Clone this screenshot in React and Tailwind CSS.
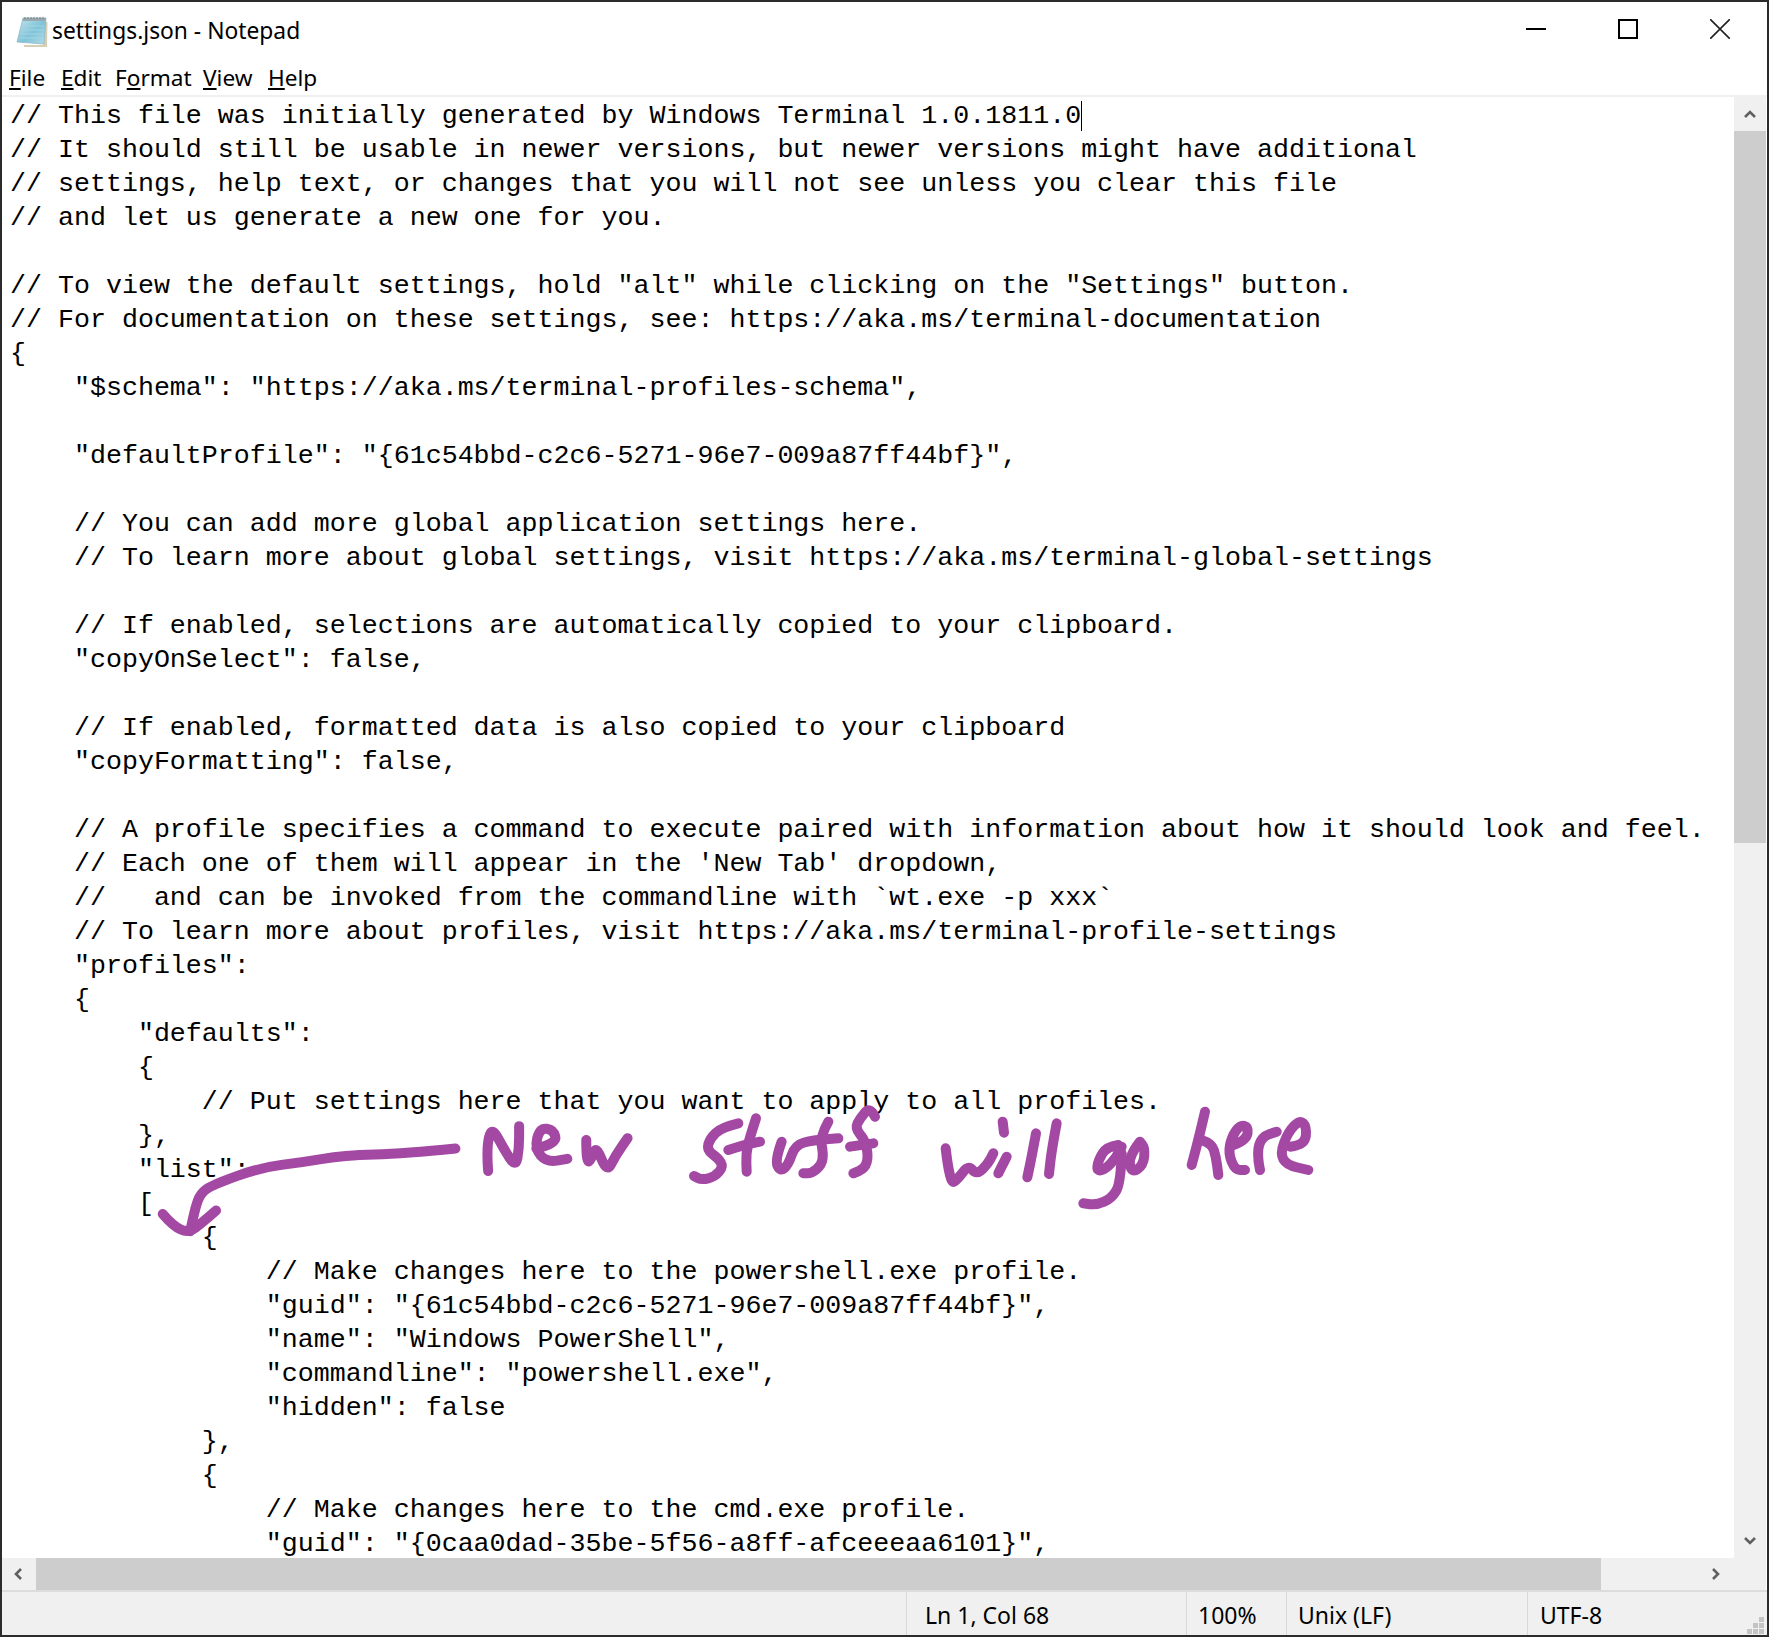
const lines = [
  '// This file was initially generated by Windows Terminal 1.0.1811.0',
  '// It should still be usable in newer versions, but newer versions might have additional',
  '// settings, help text, or changes that you will not see unless you clear this file',
  '// and let us generate a new one for you.',
  '',
  '// To view the default settings, hold "alt" while clicking on the "Settings" button.',
  '// For documentation on these settings, see: https://aka.ms/terminal-documentation',
  '{',
  '    "$schema": "https://aka.ms/terminal-profiles-schema",',
  '',
  '    "defaultProfile": "{61c54bbd-c2c6-5271-96e7-009a87ff44bf}",',
  '',
  '    // You can add more global application settings here.',
  '    // To learn more about global settings, visit https://aka.ms/terminal-global-settings',
  '',
  '    // If enabled, selections are automatically copied to your clipboard.',
  '    "copyOnSelect": false,',
  '',
  '    // If enabled, formatted data is also copied to your clipboard',
  '    "copyFormatting": false,',
  '',
  '    // A profile specifies a command to execute paired with information about how it should look and feel.',
  "    // Each one of them will appear in the 'New Tab' dropdown,",
  '    //   and can be invoked from the commandline with `wt.exe -p xxx`',
  '    // To learn more about profiles, visit https://aka.ms/terminal-profile-settings',
  '    "profiles":',
  '    {',
  '        "defaults":',
  '        {',
  '            // Put settings here that you want to apply to all profiles.',
  '        },',
  '        "list":',
  '        [',
  '            {',
  '                // Make changes here to the powershell.exe profile.',
  '                "guid": "{61c54bbd-c2c6-5271-96e7-009a87ff44bf}",',
  '                "name": "Windows PowerShell",',
  '                "commandline": "powershell.exe",',
  '                "hidden": false',
  '            },',
  '            {',
  '                // Make changes here to the cmd.exe profile.',
  '                "guid": "{0caa0dad-35be-5f56-a8ff-afceeeaa6101}",',
];

const menu = [
  { before: '', key: 'F', after: 'ile', width: 'w-[52px]' },
  { before: '', key: 'E', after: 'dit', width: 'w-[54px]' },
  { before: 'F', key: 'o', after: 'rmat', width: 'w-[88px]' },
  { before: '', key: 'V', after: 'iew', width: 'w-[65px]' },
  { before: '', key: 'H', after: 'elp', width: 'w-[60px]' },
];

// strokes traced from the crops: [originX, originY, crop scale, points]
const A = [130, 1090, 2.904];
const C = [680, 1090, 3];
const D = [1000, 1090, 3];
const ink = [
  [...A, [[945, 170], [800, 185], [620, 190], [500, 210], [380, 225], [240, 275], [205, 300], [190, 340], [175, 410]]],
  [...A, [[95, 360], [125, 395], [170, 415], [210, 385], [250, 350]]],
  [...A, [[1040, 235], [1035, 170], [1050, 105], [1085, 170], [1120, 225], [1130, 170], [1130, 105]]],
  [...A, [[1180, 170], [1240, 155], [1230, 115], [1190, 110], [1175, 170], [1210, 210], [1270, 200]]],
  [...A, [[1325, 145], [1325, 220], [1345, 190], [1355, 165], [1385, 240], [1410, 190], [1445, 140]]],
  [...C, [[175, 100], [125, 112], [90, 145], [80, 180], [115, 205], [130, 230], [105, 260], [65, 270], [42, 258]]],
  [...C, [[228, 85], [210, 140], [198, 190], [200, 245]]],
  [...C, [[145, 180], [190, 165], [240, 155]]],
  [...C, [[305, 155], [285, 210], [300, 245], [325, 225], [345, 165], [400, 150], [475, 145]]],
  [...C, [[445, 95], [420, 140], [430, 190], [425, 225], [395, 250], [370, 250]]],
  [...C, [[585, 80], [570, 50], [540, 85], [525, 115], [555, 150], [565, 200], [555, 235], [520, 250]]],
  [...C, [[510, 170], [580, 160]]],
  [...C, [[797, 175], [810, 285], [835, 265], [865, 225], [890, 255], [925, 220], [940, 190]]],
  [...C, [[968, 95], [972, 128]]],
  [...C, [[980, 200], [955, 250]]],
  [...C, [[1068, 130], [1055, 200], [1042, 262]]],
  [...D, [[170, 100], [155, 180], [147, 252]]],
  [...D, [[355, 165], [320, 170], [295, 210], [290, 245], [320, 235], [350, 200], [365, 170]]],
  [...D, [[365, 190], [362, 280], [335, 325], [290, 345], [250, 340]]],
  [...D, [[420, 155], [385, 200], [395, 250], [430, 225], [435, 175], [420, 155]]],
  [...D, [[615, 65], [600, 130], [575, 225]]],
  [...D, [[605, 150], [635, 160], [648, 200], [655, 255]]],
  [...D, [[700, 165], [740, 150], [745, 110], [720, 105], [695, 140], [685, 190], [705, 240], [735, 240]]],
  [...D, [[780, 240], [770, 190], [785, 140], [830, 125]]],
  [...D, [[870, 170], [915, 165], [920, 110], [900, 90], [865, 125], [840, 190], [860, 225], [925, 240]]],
];

function smooth([ox, oy, scale, pts]) {
  const p = pts.map(([x, y]) => [ox + x / scale, oy + y / scale]);
  let d = `M${p[0][0]} ${p[0][1]}`;
  for (let i = 1; i < p.length - 1; i++) {
    const mx = (p[i][0] + p[i + 1][0]) / 2;
    const my = (p[i][1] + p[i + 1][1]) / 2;
    d += ` Q${p[i][0]} ${p[i][1]} ${mx} ${my}`;
  }
  const last = p[p.length - 1];
  return `${d} L${last[0]} ${last[1]}`;
}

function NotepadIcon() {
  return (
    <svg width="32" height="33" viewBox="0 0 32 33" className="ml-[14px] shrink-0">
      <defs>
        <linearGradient id="page" x1="0" y1="0" x2="1" y2="1">
          <stop offset="0" stopColor="#c4e6f0" />
          <stop offset="0.55" stopColor="#7fc3d8" />
          <stop offset="1" stopColor="#b4dde9" />
        </linearGradient>
      </defs>
      <path d="M8 32 L31 32 L31.5 7 L28 7 L27 30 L8 30 Z" fill="#d6cfb4" />
      <path d="M7 3 L30 3 L28 29 L1 27 Z" fill="url(#page)" stroke="#8fb9c6" strokeWidth="0.8" />
      <path d="M6 11 H28 M5 15 H28 M4 19 H27 M3.5 23 H27" stroke="#a4d4e2" strokeWidth="1" />
      <path d="M7 3 L30 3 L29.7 6 L6.6 6 Z" fill="#9aa9ae" />
      <path d="M9 2 V4 M12 2 V4 M15 2 V4 M18 2 V4 M21 2 V4 M24 2 V4 M27 2 V4" stroke="#6f7c82" strokeWidth="1" />
    </svg>
  );
}

function Chevron({ points, className }) {
  return (
    <svg width="12" height="12" viewBox="0 0 12 12" className={className}>
      <polyline points={points} fill="none" stroke="#606060" strokeWidth="2.6" />
    </svg>
  );
}

function StatusCell({ width, pad, children }) {
  return (
    <div className={`${width} ${pad} flex h-full items-center border-l border-[#d9d9d9] pt-[3px]`}>{children}</div>
  );
}

export default function App() {
  return (
    <div className="relative flex h-[1637px] w-[1769px] flex-col overflow-hidden border-2 border-[#2b2b2b] bg-white text-black" style={{ fontFamily: '"Noto Sans", sans-serif' }}>
      <div className="flex h-[63px] shrink-0 items-center">
        <div className="flex items-center pb-[4px]">
          <NotepadIcon />
          <span className="ml-[4px] text-[22.8px] leading-none">settings.json - Notepad</span>
        </div>
        <div className="ml-auto flex h-full">
          <div className="flex w-[92px] items-center justify-center pb-[9px]">
            <svg width="20" height="20" viewBox="0 0 20 20"><rect x="0" y="9" width="20" height="2" fill="#000" /></svg>
          </div>
          <div className="flex w-[91px] items-center justify-center pb-[9px]">
            <svg width="20" height="20" viewBox="0 0 20 20"><rect x="1" y="1" width="18" height="18" fill="none" stroke="#000" strokeWidth="2" /></svg>
          </div>
          <div className="flex w-[94px] items-center justify-center pb-[9px]">
            <svg width="20" height="20" viewBox="0 0 20 20"><path d="M0 0 L20 20 M20 0 L0 20" stroke="#222" strokeWidth="1.6" /></svg>
          </div>
        </div>
      </div>

      <div className="flex h-[30px] shrink-0 items-center pb-[3px] pl-[7px] text-[22.6px] leading-none">
        {menu.map((item) => (
          <span key={item.key} className={item.width}>
            {item.before}<span className="underline">{item.key}</span>{item.after}
          </span>
        ))}
      </div>
      <div className="h-[2px] shrink-0 bg-[#f0f0f0]" />

      <div className="flex min-h-0 flex-1">
        <div className="min-w-0 flex-1 overflow-hidden pl-[8px] pt-[2px]">
          <pre className="text-[26.65px] leading-[34px]" style={{ fontFamily: '"Liberation Mono", monospace' }}>
            {lines.map((line, i) => (
              <div key={i} className="h-[34px]">
                {line}
                {i === 0 ? <span className="inline-block h-[30px] w-px bg-black align-middle" /> : null}
              </div>
            ))}
          </pre>
        </div>
        <div className="mr-px flex w-[32px] shrink-0 flex-col bg-[#f0f0f0]">
          <div className="flex h-[34px] shrink-0 items-center justify-center">
            <Chevron points="1,9 6,4 11,9" />
          </div>
          <div className="h-[712px] shrink-0 bg-[#cdcdcd]" />
          <div className="flex-1" />
          <div className="flex h-[34px] shrink-0 items-center justify-center">
            <Chevron points="1,3 6,8 11,3" />
          </div>
        </div>
      </div>

      <div className="mr-px flex h-[32px] shrink-0 bg-[#f0f0f0]">
        <div className="flex w-[34px] shrink-0 items-center justify-center">
          <Chevron points="8,1 3,6 8,11" />
        </div>
        <div className="w-[1565px] shrink-0 bg-[#cdcdcd]" />
        <div className="flex-1" />
        <div className="mr-[34px] flex w-[34px] shrink-0 items-center justify-center">
          <Chevron points="4,1 9,6 4,11" />
        </div>
      </div>

      <div className="relative flex h-[45px] shrink-0 items-center border-t-2 border-[#dcdcdc] bg-[#f0f0f0] text-[23px] leading-none">
        <div className="w-[904px] shrink-0" />
        <StatusCell width="w-[280px]" pad="pl-[18px]">Ln 1, Col 68</StatusCell>
        <StatusCell width="w-[100px]" pad="pl-[11px]">100%</StatusCell>
        <StatusCell width="w-[241px]" pad="pl-[11px]">Unix (LF)</StatusCell>
        <StatusCell width="flex-1" pad="pl-[12px]">UTF-8</StatusCell>
        <svg width="18" height="18" viewBox="0 0 18 18" className="absolute bottom-0 right-[2px]" fill="#c4c4c4">
          <rect x="12" y="0" width="5" height="5" />
          <rect x="6" y="6" width="5" height="5" />
          <rect x="12" y="6" width="5" height="5" />
          <rect x="0" y="12" width="5" height="5" />
          <rect x="6" y="12" width="5" height="5" />
          <rect x="12" y="12" width="5" height="5" />
        </svg>
      </div>

      <svg width="1769" height="1637" viewBox="0 0 1769 1637" className="pointer-events-none absolute left-[-2px] top-[-2px]">
        {ink.map((stroke, i) => (
          <path key={i} d={smooth(stroke)} fill="none" stroke="#a349a4" strokeWidth="10" strokeLinecap="round" strokeLinejoin="round" />
        ))}
      </svg>
    </div>
  );
}
